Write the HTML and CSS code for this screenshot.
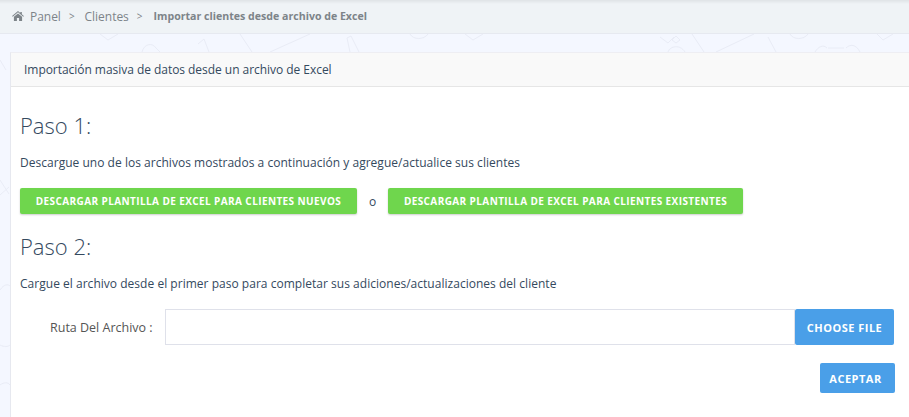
FILE: index.html
```html
<!DOCTYPE html>
<html lang="es">
<head>
<meta charset="utf-8">
<title>Importar clientes desde archivo de Excel</title>
<link rel="stylesheet" href="styles.css">
</head>
<body>
<svg class="doodles" width="909" height="417" viewBox="0 0 909 417" fill="none" stroke="#e9ecf6" stroke-width="1" aria-hidden="true">
<path d="M100 34l8 6 10-6M142 52c2-8 10-10 14-4l4 4M198 44l6-5 5 13M240 34l12 18M270 52l40-18M350 52l-3-14 4-2 8 16M410 34c3 6 14 6 18 0M465 34l8 6 10-6M660 37l8 6 6-6M672 40l4 3 4-3-4-4zM668 52c2-6 12-8 17 0M692 34l12 18M716 52l38-18M768 37l8 15M790 34c3 6 14 6 18 0M815 52c3-5 8-8 12-4M828 48h16M846 48c4-4 10-4 14 4M877 34l6 6 10-6"/>
<path d="M0 180l9 14M0 195l9-8M0 290c4-6 8-6 10-4M0 345c4 2 8 2 10 0M0 60l6 10M0 385c4-3 8-3 10 0"/>
</svg>
<nav class="breadcrumb">
<svg class="home" width="12" height="10" viewBox="0 0 13 11" aria-hidden="true"><path fill="#7d8489" d="M6.5 0 9 2.1V1h1.7v2.5L13 5.5l-.7.8L6.5 1.5.7 6.3 0 5.5zM2 6.4l4.5-3.7L11 6.4V11H7.7V7.8H5.3V11H2z"/></svg>
<span class="crumb">Panel</span>
<span class="sep">&gt;</span>
<span class="crumb">Clientes</span>
<span class="sep">&gt;</span>
<strong class="crumb-current">Importar clientes desde archivo de Excel</strong>
</nav>
<main class="wrapper">
<section class="card">
<header class="card-head">Importación masiva de datos desde un archivo de Excel</header>
<div class="card-body">
<h2 class="step step-one">Paso 1:</h2>
<p class="desc">Descargue uno de los archivos mostrados a continuación y agregue/actualice sus clientes</p>
<div class="downloads">
<a class="btn btn-green btn-new">DESCARGAR PLANTILLA DE EXCEL PARA CLIENTES NUEVOS</a>
<span class="or">o</span>
<a class="btn btn-green btn-existing">DESCARGAR PLANTILLA DE EXCEL PARA CLIENTES EXISTENTES</a>
</div>
<h2 class="step step-two">Paso 2:</h2>
<p class="desc">Cargue el archivo desde el primer paso para completar sus adiciones/actualizaciones del cliente</p>
<div class="file-row">
<label class="file-label">Ruta Del Archivo :</label>
<div class="file-input"></div>
<a class="btn btn-blue btn-choose">CHOOSE FILE</a>
</div>
<div class="actions"><a class="btn btn-blue btn-accept">ACEPTAR</a></div>
</div>
</section>
</main>
</body>
</html>
```
FILE: styles.css
```css
* { box-sizing: border-box; }
html, body { margin: 0; height: 417px; overflow: hidden; }
body {
  position: relative;
  background: #f4f7ff;
  font-family: "Open Sans", "Noto Sans", sans-serif;
  font-size: 12px;
  color: #34495e;
}
.doodles { position: absolute; left: 0; top: 0; }
.breadcrumb {
  position: relative;
  height: 34px;
  display: flex;
  align-items: center;
  padding: 0 0 1px 12px;
  background: linear-gradient(#dfe3e6 0, #eff3f6 4px);
  border-bottom: 1px solid #e6e9f0;
  color: #7d8489;
  font-size: 12px;
}
.home { margin-right: 6px; }
.crumb { letter-spacing: -.03px; }
.sep { margin: 0 10px 0 8px; font-size: 10px; }
.crumb-current { margin-left: 1px; font-weight: 700; font-size: 10.6px; }
.wrapper { position: relative; padding: 18px 0 0 10px; }
.card {
  height: 365px;
  background: #fff;
  border-left: 1px solid #e6e8ef;
  border-top: 1px solid #eeeef3;
}
.card-head {
  height: 34px;
  padding: 0 0 1px 13px;
  display: flex;
  align-items: center;
  background: #f9f9f9;
  border-bottom: 1px solid #e6e6e6;
  letter-spacing: -.04px;
}
.card-body { padding-left: 9px; padding-right: 14px; }
.step { margin: 0; font-weight: 300; font-size: 22px; line-height: 26px; }
.step-one { padding-top: 25px; }
.step-two { padding-top: 19px; }
.desc { margin: 0; line-height: 15px; letter-spacing: .025px; }
.step-one + .desc { padding-top: 17px; }
.step-two + .desc { padding-top: 17px; }
.downloads { display: flex; align-items: center; margin-top: 18px; }
.btn {
  display: flex;
  align-items: center;
  justify-content: center;
  color: #fff;
  font-weight: 700;
  font-size: 10px;
  letter-spacing: .4px;
  border-radius: 2px;
}
.btn-green { height: 26px; background: #6fd64d; box-shadow: 0 1px 2px rgba(0,0,0,.2); }
.btn-new { width: 337px; }
.btn-existing { width: 355px; }
.or { width: 31px; text-align: center; }
.file-row { display: flex; align-items: center; margin-top: 18px; }
.file-label { width: 145px; padding-left: 30px; color: #555; font-size: 12.5px; }
.file-input { flex: none; width: 630px; height: 36px; border: 1px solid #dfe1ea; }
.btn-blue { background: #4a9fe8; font-size: 11px; letter-spacing: .5px; }
.btn-choose { width: 99px; height: 36px; }
.actions { display: flex; justify-content: flex-end; margin-top: 18px; }
.btn-accept { width: 75px; height: 30px; padding-right: 4px; }
```
